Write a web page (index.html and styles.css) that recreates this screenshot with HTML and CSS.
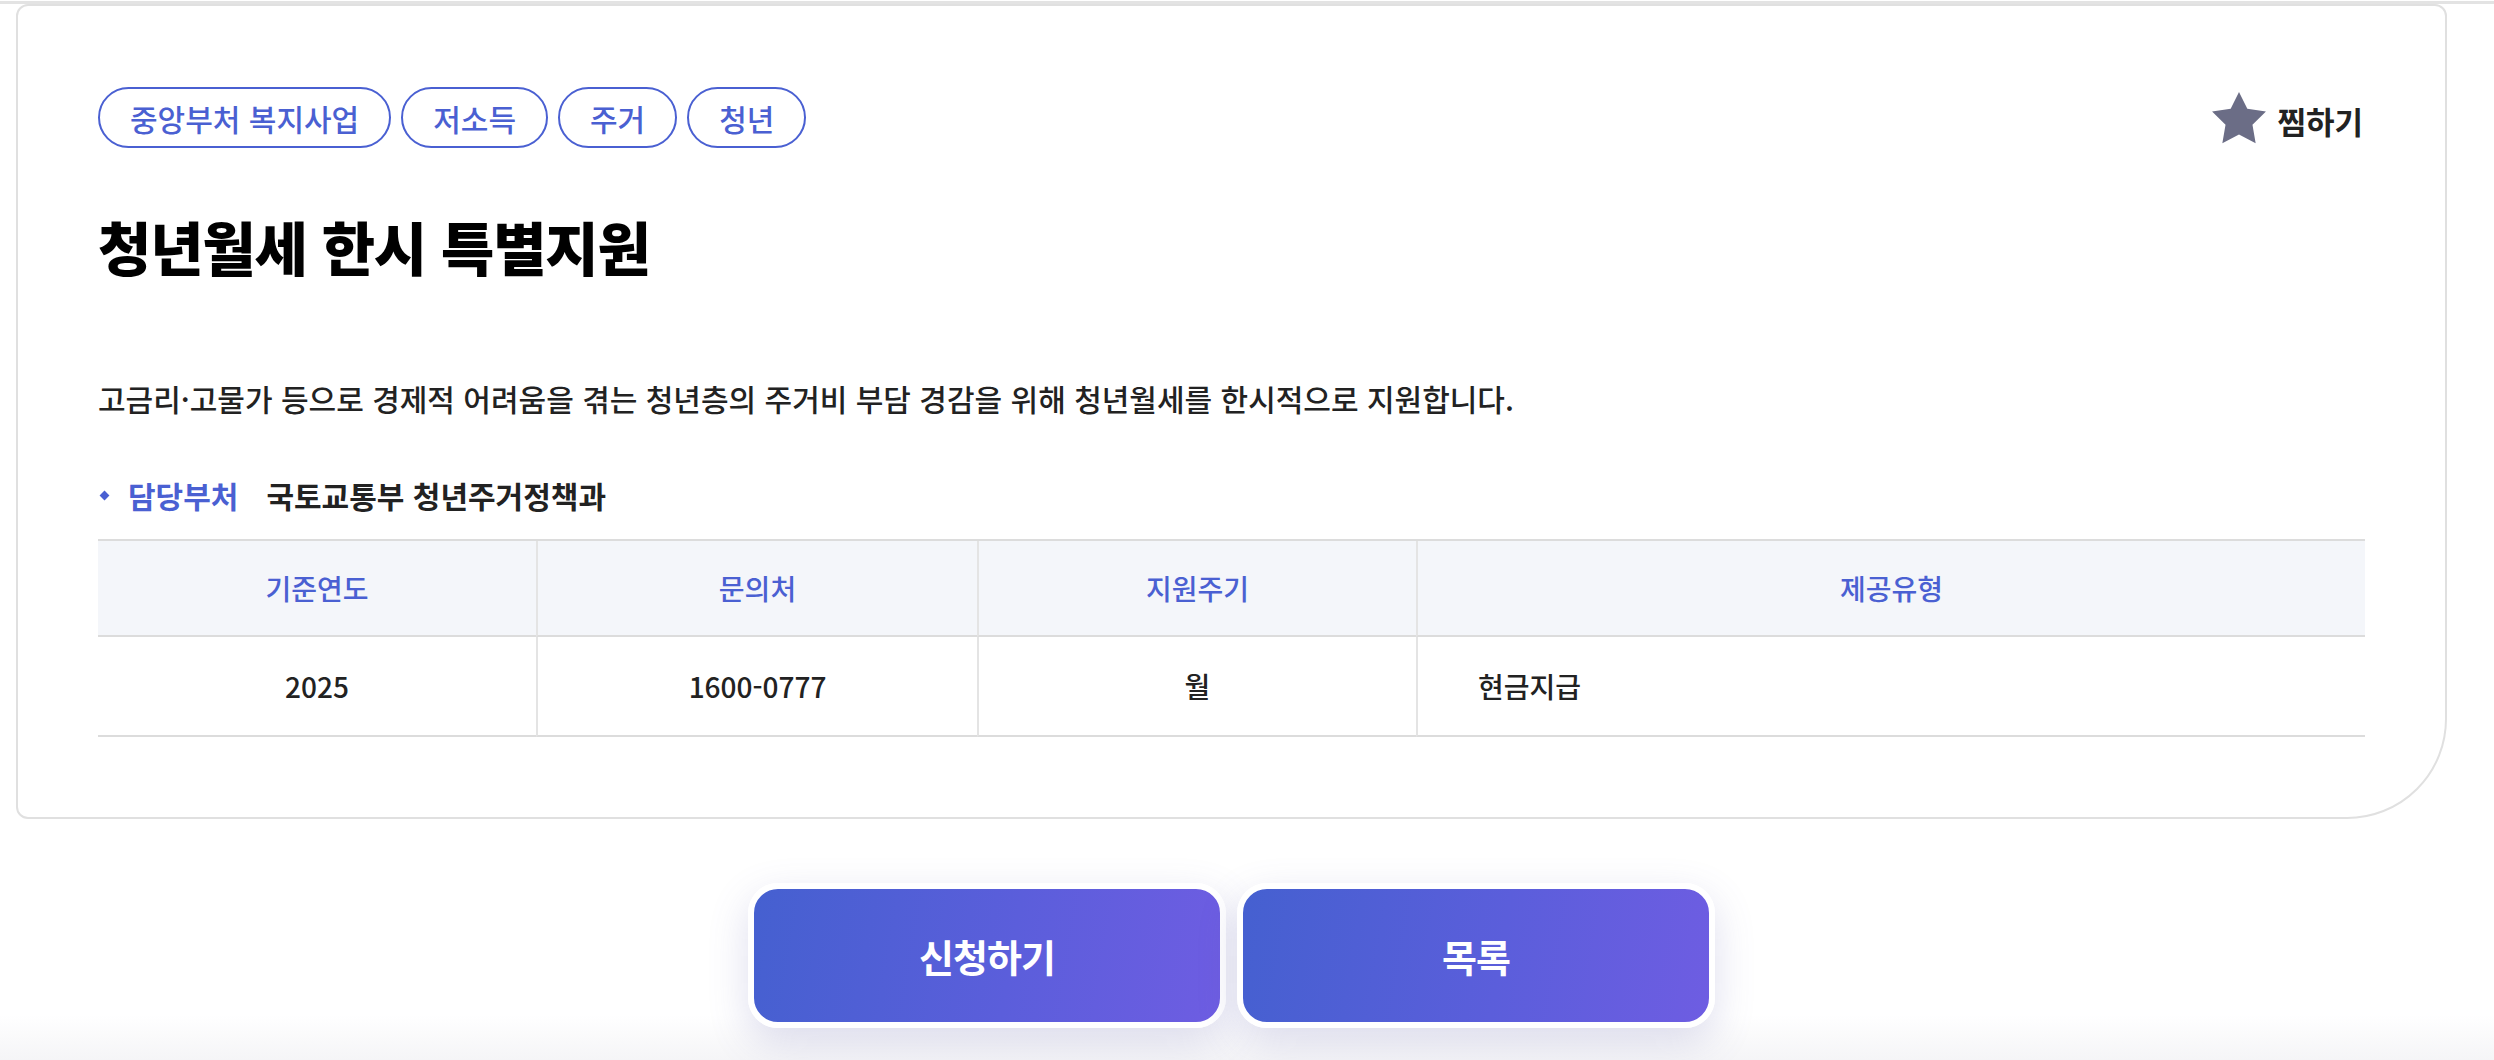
FILE: index.html
```html
<!DOCTYPE html>
<html lang="ko">
<head>
<meta charset="utf-8">
<title>청년월세 한시 특별지원</title>
<link rel="stylesheet" href="styles.css">
</head>
<body>
<div class="topbar"></div>
<main class="wrap">
  <section class="card">
    <div class="card-head">
      <ul class="tags">
        <li class="tag">중앙부처 복지사업</li>
        <li class="tag">저소득</li>
        <li class="tag">주거</li>
        <li class="tag">청년</li>
      </ul>
      <button class="fav" type="button">
        <svg class="star" viewBox="2 2 20 19.3" width="54" height="52" aria-hidden="true"><path d="M12 2l3.09 6.26L22 9.27l-5 4.87 1.18 6.88L12 17.77l-6.18 3.25L7 14.14 2 9.27l6.91-1.01L12 2z"/></svg>
        <span>찜하기</span>
      </button>
    </div>
    <h1 class="title">청년월세 한시 특별지원</h1>
    <p class="desc">고금리·고물가 등으로 경제적 어려움을 겪는 청년층의 주거비 부담 경감을 위해 청년월세를 한시적으로 지원합니다.</p>
    <div class="dept">
      <span class="dept-dot"></span>
      <span class="dept-label">담당부처</span>
      <span class="dept-name">국토교통부 청년주거정책과</span>
    </div>
    <div class="info">
      <div class="th">기준연도</div>
      <div class="th">문의처</div>
      <div class="th">지원주기</div>
      <div class="th">제공유형</div>
      <div class="td">2025</div>
      <div class="td">1600-0777</div>
      <div class="td">월</div>
      <div class="td td-left">현금지급</div>
    </div>
  </section>
  <div class="actions">
    <a class="btn" href="#">신청하기</a>
    <a class="btn" href="#">목록</a>
  </div>
</main>
</body>
</html>
```

FILE: styles.css
```css
* { box-sizing: border-box; }

html, body { margin: 0; padding: 0; }

body {
  min-height: 1060px;
  font-family: "Noto Sans CJK KR", "Noto Sans", sans-serif;
  color: #222;
  background: linear-gradient(to bottom, #ffffff 0, #ffffff 1015px, #f5f5f7 1060px);
}

.topbar {
  height: 3px;
  margin-top: 1px;
  background: #e3e3e3;
}

.wrap {
  padding: 0 47px 0 16px;
}

.card {
  background: #fff;
  border: 2px solid #e0e0e0;
  border-radius: 12px 12px 100px 12px;
  padding: 81px 80px 80px 80px;
}

.card-head {
  display: flex;
  justify-content: space-between;
  align-items: center;
}

.tags {
  display: flex;
  gap: 10px;
  margin: 0;
  padding: 0;
  list-style: none;
}

.tag {
  height: 61px;
  display: flex;
  align-items: center;
  padding: 0 30px;
  border: 2px solid #4a60d2;
  border-radius: 31px;
  color: #4a60d2;
  font-size: 30px;
  font-weight: 500;
  line-height: 1;
}

.fav {
  display: flex;
  align-items: center;
  gap: 11px;
  margin-right: 2px;
  padding: 0;
  border: 0;
  background: none;
  font-family: inherit;
  font-size: 31px;
  font-weight: 700;
  color: #222;
  cursor: pointer;
}

.fav span { margin-top: 6px; }

.star { fill: #6b6d86; display: block; }

.title {
  margin: 61px 0 0;
  font-size: 58px;
  line-height: 75px;
  font-weight: 800;
  letter-spacing: -1.2px;
  color: #000;
}

.desc {
  margin: 94px 0 0;
  font-size: 30px;
  line-height: 40px;
  font-weight: 500;
  color: #222;
}

.dept {
  display: flex;
  align-items: center;
  margin-top: 57px;
  font-size: 30px;
  line-height: 40px;
  font-weight: 700;
}

.dept-dot {
  width: 7px;
  height: 7px;
  margin: 0 20px 0 3px;
  background: #4a60d2;
  transform: rotate(45deg);
}

.dept-label {
  color: #4a60d2;
  margin-right: 28px;
}

.dept-name { color: #222; }

.info {
  display: grid;
  grid-template-columns: 438px 441px 439px 1fr;
  margin-top: 24px;
  border-top: 2px solid #dcdcdc;
}

.th, .td {
  display: flex;
  align-items: center;
  justify-content: center;
  font-size: 28px;
  font-weight: 500;
  border-bottom: 2px solid #dcdcdc;
}

.th {
  height: 96px;
  background: #f4f6fa;
  color: #4a60d2;
}

.td {
  height: 100px;
  color: #222;
}

.th + .th, .td + .td { border-left: 2px solid #e4e4e4; }

.td-left {
  justify-content: flex-start;
  padding-left: 60px;
}

.actions {
  display: flex;
  justify-content: center;
  gap: 11px;
  margin-top: 64px;
}

.btn {
  width: 478px;
  height: 145px;
  display: flex;
  align-items: center;
  justify-content: center;
  border: 6px solid #fff;
  border-radius: 30px;
  background: linear-gradient(100deg, #4560d0 0%, #5b5edb 55%, #6e5de2 100%);
  box-shadow: 0 14px 40px rgba(90, 90, 170, 0.2);
  color: #fff;
  font-size: 38px;
  font-weight: 700;
  letter-spacing: -1px;
  text-decoration: none;
}
```
